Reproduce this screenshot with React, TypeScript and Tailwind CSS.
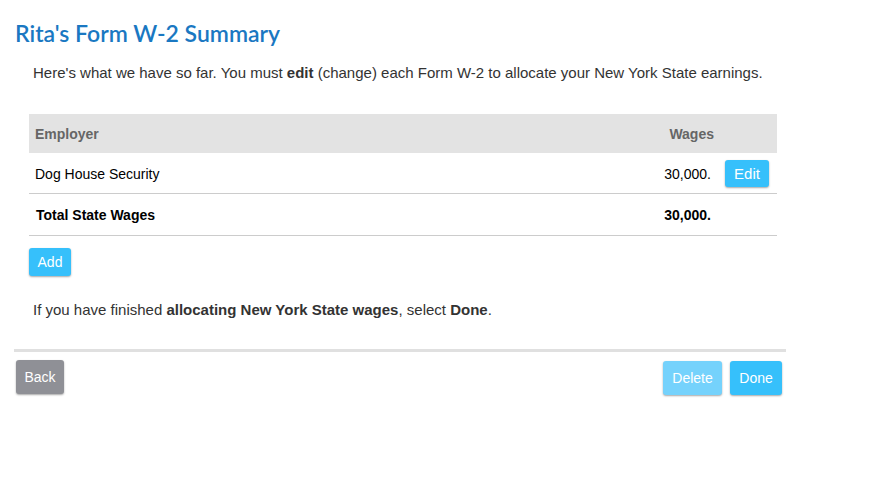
import React from "react";

const btn =
  "rounded-[3px] text-white text-[14px] leading-none shadow-[0_1px_2px_rgba(0,0,0,0.35)] flex items-center justify-center";

export default function App() {
  return (
    <div className="w-[873px] h-[494px] bg-white font-['Liberation_Sans',Arial,sans-serif] text-[#333]">
      <div className="w-[786px] pl-[14px] pt-[18px]">
        <h1 className="pl-[1px] text-[23px] leading-[30px] font-semibold text-[#1a78c2] font-['Lato','Open_Sans',sans-serif]">
          Rita's Form W-2 Summary
        </h1>
        <p className="mt-[15px] pl-[19px] text-[15px] leading-[20px]">
          Here's what we have so far. You must <b>edit</b> (change) each Form W-2 to allocate your New York State earnings.
        </p>

        <div className="mt-[31px] ml-[15px] w-[748px]">
          <div className="flex items-center h-[39px] bg-[#e3e3e3] text-[14px] font-bold text-[#666]">
            <div className="flex-1 pl-[6px] pt-[2px]">Employer</div>
            <div className="w-[100px] text-right pt-[2px]">Wages</div>
            <div className="w-[63px]" />
          </div>
          <div className="flex items-center h-[41px] border-b border-[#ccc] text-[14px] text-black">
            <div className="flex-1 pl-[6px] pt-[2px]">Dog House Security</div>
            <div className="w-[100px] text-right pr-[1px] pt-[2px]">30,000.</div>
            <div className="w-[65px] flex justify-end pr-[8px] pt-[1px]">
              <button className={`${btn} w-[44px] h-[27px] bg-[#36c0fb] text-[15px]`}>Edit</button>
            </div>
          </div>
          <div className="flex items-center h-[42px] border-b border-[#ccc] text-[14px] font-bold text-black">
            <div className="flex-1 pl-[7px] pt-[2px]">Total State Wages</div>
            <div className="w-[100px] text-right pr-[1px] pt-[2px]">30,000.</div>
            <div className="w-[65px]" />
          </div>
          <button className={`${btn} mt-[12px] w-[42px] h-[28px] bg-[#36c0fb]`}>Add</button>
        </div>

        <p className="mt-[24px] pl-[19px] text-[15px] leading-[20px]">
          If you have finished <b>allocating New York State wages</b>, select <b>Done</b>.
        </p>

        <div className="mt-[29px] h-[3px] bg-[#e0e0e0]" />

        <div className="mt-[8px] flex items-start justify-between pl-[2px] pr-[4px]">
          <button className={`${btn} w-[48px] h-[34px] bg-[#8f9096]`}>Back</button>
          <div className="flex gap-[8px] pt-[1px]">
            <button className={`${btn} w-[59px] h-[34px] bg-[#75d2fc]`}>Delete</button>
            <button className={`${btn} w-[52px] h-[34px] bg-[#36c0fb]`}>Done</button>
          </div>
        </div>
      </div>
    </div>
  );
}
